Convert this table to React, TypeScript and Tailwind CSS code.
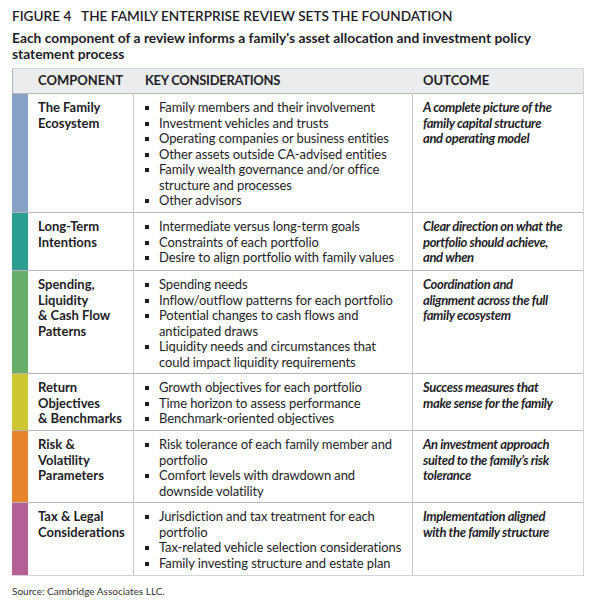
import React from "react";

type Row = {
  color: string;
  name: string[];
  items: string[][];
  outcome: string[];
  h: string;
};

const rows: Row[] = [
  {
    color: "bg-[#87a2c4]",
    name: ["The Family", "Ecosystem"],
    items: [
      ["Family members and their involvement"],
      ["Investment vehicles and trusts"],
      ["Operating companies or business entities"],
      ["Other assets outside CA-advised entities"],
      ["Family wealth governance and/or office", "structure and processes"],
      ["Other advisors"],
    ],
    outcome: ["A complete picture of the", "family capital structure", "and operating model"],
    h: "h-[119px]",
  },
  {
    color: "bg-[#2a9e91]",
    name: ["Long-Term", "Intentions"],
    items: [
      ["Intermediate versus long-term goals"],
      ["Constraints of each portfolio"],
      ["Desire to align portfolio with family values"],
    ],
    outcome: ["Clear direction on what the", "portfolio should achieve,", "and when"],
    h: "h-[58px]",
  },
  {
    color: "bg-[#69ad6a]",
    name: ["Spending,", "Liquidity", "& Cash Flow", "Patterns"],
    items: [
      ["Spending needs"],
      ["Inflow/outflow patterns for each portfolio"],
      ["Potential changes to cash flows and", "anticipated draws"],
      ["Liquidity needs and circumstances that", "could impact liquidity requirements"],
    ],
    outcome: ["Coordination and", "alignment across the full", "family ecosystem"],
    h: "h-[103px]",
  },
  {
    color: "bg-[#cdc630]",
    name: ["Return", "Objectives", "& Benchmarks"],
    items: [
      ["Growth objectives for each portfolio"],
      ["Time horizon to assess performance"],
      ["Benchmark-oriented objectives"],
    ],
    outcome: ["Success measures that", "make sense for the family"],
    h: "h-[57px]",
  },
  {
    color: "bg-[#e8842b]",
    name: ["Risk &", "Volatility", "Parameters"],
    items: [
      ["Risk tolerance of each family member and", "portfolio"],
      ["Comfort levels with drawdown and", "downside volatility"],
    ],
    outcome: ["An investment approach", "suited to the family\u2019s risk", "tolerance"],
    h: "h-[72px]",
  },
  {
    color: "bg-[#b45f96]",
    name: ["Tax & Legal", "Considerations"],
    items: [
      ["Jurisdiction and tax treatment for each", "portfolio"],
      ["Tax-related vehicle selection considerations"],
      ["Family investing structure and estate plan"],
    ],
    outcome: ["Implementation aligned", "with the family structure"],
    h: "h-[73px]",
  },
];

export default function App() {
  return (
    <div
      className="w-[598px] h-[606px] bg-white text-[#1d1d26] overflow-hidden"
      style={{ fontFamily: "Lato, 'Open Sans', sans-serif" }}
    >
      <div className="pl-[12px] pt-[7px]">
        <div className="text-[13.6px] leading-[18px] font-semibold whitespace-nowrap">
          FIGURE 4&nbsp;&nbsp;&nbsp;THE FAMILY ENTERPRISE REVIEW SETS THE FOUNDATION
        </div>
        <div className="mt-[5px] text-[13.8px] leading-[16px] font-bold w-[570px]">
          Each component of a review informs a family's asset allocation and investment policy
          <br />
          statement process
        </div>
      </div>

      <div className="ml-[12px] mt-[6px] w-[572px] border-r border-[#d4d4d4] border-b border-b-[#d4d4d4]">
        <div className="flex h-[25px] bg-[#ebeced] border-t border-[#d8d8d8] border-l border-l-[#b0b0b0] text-[13px] font-bold items-center">
          <div className="w-[15px]" />
          <div className="w-[106px] pl-[10px]">COMPONENT</div>
          <div className="w-[279px] pl-[11px] tracking-[-0.3px]">KEY CONSIDERATIONS</div>
          <div className="flex-1 pl-[10px]">OUTCOME</div>
        </div>
        {rows.map((r, i) => (
          <div key={i} className={`flex ${r.h} border-t border-[#b8b8b8] text-[13px] leading-[15.5px]`}>
            <div className={`w-[16px] ${r.color} shrink-0`} />
            <div className="w-[106px] shrink-0 pl-[10px] pt-[6px] font-bold border-r border-[#c8c8c8]">
              {r.name.map((n, j) => (
                <div key={j}>{n}</div>
              ))}
            </div>
            <div className="w-[279px] shrink-0 pt-[6px] border-r border-[#c8c8c8] tracking-[-0.1px]">
              {r.items.map((it, j) => (
                <div key={j} className="flex">
                  <div className="w-[25px] shrink-0 flex justify-start pl-[11px] pt-[6px]">
                    <div className="w-[4px] h-[4px] bg-[#1d1d26]" />
                  </div>
                  <div>
                    {it.map((l, k) => (
                      <div key={k}>{l}</div>
                    ))}
                  </div>
                </div>
              ))}
            </div>
            <div className="flex-1 pl-[10px] pt-[6px] italic font-bold tracking-[-0.35px]">
              {r.outcome.map((o, j) => (
                <div key={j}>{o}</div>
              ))}
            </div>
          </div>
        ))}
      </div>
      <div className="pl-[12px] pt-[8px] text-[10px] text-[#333]">Source: Cambridge Associates LLC.</div>
    </div>
  );
}
